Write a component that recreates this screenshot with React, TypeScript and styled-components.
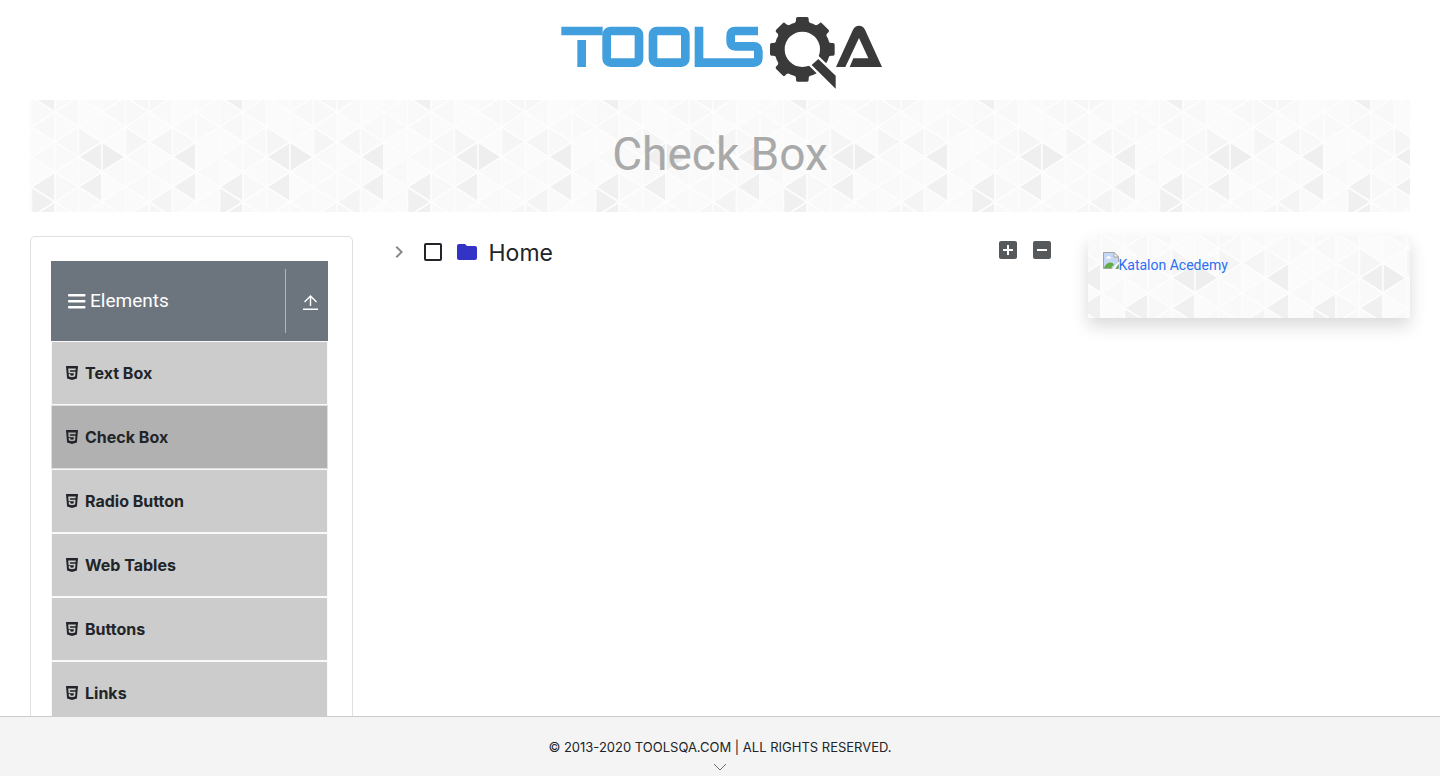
import React from "react";
import styled, { createGlobalStyle } from "styled-components";
import { MdAddBox, MdChevronRight, MdFolder, MdIndeterminateCheckBox } from "react-icons/md";
import { IoLogoHtml5 } from "react-icons/io5";

/* ---------- triangle texture shared by the banner and the promo card ---------- */

const COLUMN = 23.5;
const HALF_ROW = 15;
const TILE_WIDTH = 188;
const TILE_HEIGHT = 120;
const SHIFT_X = -30.5;

// One entry per column, two hex digits of grey per triangle from top to bottom.
const SHADES = [
  "f0 f9 f8 fb f9 fb f0 f0",
  "f9 f8 fa f8 f9 fa f8 f9",
  "fa fb fb f5 ef f9 f0 f9",
  "f9 f8 fa fb ee f9 fb f9",
  "f6 f8 f9 f5 f9 fa f9 fa",
  "f6 f9 fb f5 fb f9 fa f4",
  "fb fb f9 f8 ef fa f0 f9",
  "fa fa f9 fb fb f9 fb fa",
].map((row) => row.split(" "));

const buildTexture = () => {
  const shapes: string[] = [];
  for (let column = 0; column < 10; column += 1) {
    for (let step = -4; step <= 4; step += 1) {
      const grey = SHADES[column % 8][(step + 4) % 8];
      const left = SHIFT_X + column * COLUMN;
      const right = left + COLUMN;
      const y = 61 + step * HALF_ROW;
      const tipLeft = (column + Math.abs(step)) % 2 === 0;
      const tip = tipLeft ? left : right;
      const base = tipLeft ? right : left;
      shapes.push(
        `<path d="M${tip} ${y}L${base} ${y - HALF_ROW}V${y + HALF_ROW}Z" fill="#${grey}${grey}${grey}"/>`
      );
    }
  }
  const svg = `<svg xmlns="http://www.w3.org/2000/svg" width="${TILE_WIDTH}" height="${TILE_HEIGHT}"><g stroke="#fdfdfd" stroke-width="1.6" stroke-linejoin="round">${shapes.join("")}</g></svg>`;
  return `url("data:image/svg+xml,${encodeURIComponent(svg)}")`;
};

const texture = buildTexture();

/* ---------- styles ---------- */

const GlobalStyle = createGlobalStyle`
  *, *::before, *::after { box-sizing: border-box; }
  body {
    margin: 0;
    background: #fff;
    color: #212529;
    font-family: Inter, "Liberation Sans", sans-serif;
    font-size: 16px;
    line-height: 24px;
  }
  svg { display: block; flex: none; }
`;

const Page = styled.div`
  display: flex;
  flex-direction: column;
  height: 100vh;
`;

const Content = styled.div`
  flex: 1;
  min-height: 0;
  overflow-y: auto;
  scrollbar-width: none;
  padding: 0 30px;
`;

const Header = styled.header`
  display: flex;
  justify-content: center;
  padding: 5px 0 0;
`;

const Banner = styled.div`
  display: flex;
  align-items: center;
  justify-content: center;
  height: 112px;
  margin-bottom: 24px;
  padding-bottom: 4px;
  background: ${texture} center / ${TILE_WIDTH}px ${TILE_HEIGHT}px;
`;

const Title = styled.h1`
  margin: 0;
  color: #a9a9a9;
  font-family: Roboto, sans-serif;
  font-size: 46px;
  font-weight: 400;
  line-height: 56px;
`;

const Row = styled.div`
  display: flex;
  align-items: flex-start;
  margin: 0 -15px;
`;

const Column = styled.div<{ $share: number }>`
  flex: 0 0 ${(p) => p.$share}%;
  min-width: 0;
  padding: 0 15px;
`;

const Sidebar = styled.nav`
  padding: 24px 24px 24px 20px;
  border: 1px solid #dfdfdf;
  border-radius: 5px;
`;

const GroupHeader = styled.button`
  display: flex;
  align-items: center;
  width: 100%;
  height: 80px;
  padding: 0 10px 0 17px;
  border: 0;
  background: #6c757d;
  color: #fff;
  font-family: Roboto, sans-serif;
  font-size: 19px;
  line-height: 24px;
  text-align: left;
  cursor: pointer;
`;

const GroupName = styled.span`
  flex: 1;
  margin-left: 4px;
`;

const GroupToggle = styled.span`
  display: flex;
  align-items: center;
  height: 64px;
  padding-left: 17px;
  border-left: 1px solid #b5b5b5;
`;

const Menu = styled.ul`
  margin: 0;
  padding: 0;
  list-style: none;
`;

const MenuLink = styled.a<{ $active: boolean }>`
  display: flex;
  align-items: center;
  gap: 5px;
  height: 64px;
  padding: 0 12px;
  border: 1px solid ${(p) => (p.$active ? "#dcdee0" : "#f8f9fa")};
  background: ${(p) => (p.$active ? "#b1b1b1" : "#ccc")};
  color: #212529;
  font-weight: 700;
  text-decoration: none;
`;

const TreeBar = styled.div`
  display: flex;
  align-items: flex-start;
  justify-content: space-between;
  padding: 2px 4px 0;
`;

const TreeNode = styled.div`
  display: flex;
  align-items: center;
  height: 28px;
`;

const IconButton = styled.button`
  display: flex;
  padding: 0;
  border: 0;
  background: none;
  color: #56595c;
  cursor: pointer;
`;

const ToggleButton = styled(IconButton)`
  color: #888;
`;

const NodeLabel = styled.label`
  display: flex;
  align-items: center;
  margin-left: 13px;
  font-size: 23px;
  line-height: 28px;
`;

const NodeBox = styled.input`
  appearance: none;
  width: 18px;
  height: 18px;
  margin: 0 13px 0 0;
  border: 2px solid #212529;
  border-radius: 2px;
  &:checked { background: #212529; }
`;

const NodeName = styled.span`
  margin-left: 10px;
  padding-top: 2px;
`;

const TreeActions = styled.div`
  display: flex;
  gap: 10px;
`;

const Promo = styled.aside`
  height: 82px;
  padding: 16px 15px;
  background: ${texture} center / ${TILE_WIDTH}px ${TILE_HEIGHT}px;
  box-shadow: 0 8px 16px rgba(0, 0, 0, 0.15);
`;

const PromoLink = styled.a`
  display: flex;
  align-items: flex-start;
  color: #2b6ff3;
  font-family: Roboto, sans-serif;
  font-size: 14px;
  line-height: 26px;
  text-decoration: none;
`;

const Footer = styled.footer`
  display: flex;
  flex: none;
  flex-direction: column;
  align-items: center;
  gap: 4px;
  height: 60px;
  padding-top: 18px;
  border-top: 1px solid #c8cacc;
  background: #f4f4f4;
  font-size: 13px;
`;

/* ---------- drawings ---------- */

const teeth = [0, 45, 90, 180, 225, 270, 315];

const Logo = () => (
  <svg width="340" height="95" viewBox="0 0 1020 285" role="img" aria-label="ToolsQA">
    <g fill="none" stroke="#409fdc" strokeWidth="26">
      <path d="M34 78H158M95 105V186" />
      <rect x="170" y="78" width="97" height="95" rx="12" />
      <rect x="309" y="78" width="97" height="95" rx="12" />
      <path d="M447 65V173H611Q625 173 625 159V138Q625 124 611 124H556Q542 124 542 110V92Q542 78 556 78H624" />
    </g>
    <g fill="#3a3a3a">
      <circle cx="757" cy="133" r="68" fill="none" stroke="#3a3a3a" strokeWidth="30" />
      {teeth.map((angle) => (
        <path
          key={angle}
          transform={`rotate(${angle} 757 133)`}
          d="M725 62Q738 54 738 46V41Q738 36 743 36H771Q776 36 776 41V46Q776 54 789 62Z"
        />
      ))}
      <path d="M805 162L857 212V251L785 180Z" stroke="#fff" strokeWidth="14" />
      <path d="M805 162L857 212V251L785 180Z" />
      <path d="M858 186L909 74Q915 62 927 62T945 74L996 186H899L910 160H955L927 99L886 186Z" />
    </g>
  </svg>
);

const BarsIcon = () => (
  <svg width="18" height="18" viewBox="0 0 18 18" fill="currentColor" aria-hidden="true">
    <rect y="2" width="17.5" height="2.6" rx="1" />
    <rect y="8" width="17.5" height="2.6" rx="1" />
    <rect y="14" width="17.5" height="2.6" rx="1" />
  </svg>
);

const RaiseIcon = () => (
  <svg width="15" height="18" viewBox="0 0 15 18" fill="none" stroke="currentColor" strokeWidth="1.4" aria-hidden="true">
    <path d="M7.5 14V4M1.5 10L7.5 4L13.5 10M0 17.3H15" />
  </svg>
);

const MissingImageIcon = () => (
  <svg width="16" height="17" viewBox="0 0 16 17" aria-hidden="true">
    <path d="M.5.5H11L15.5 5V16.5H.5Z" fill="#c6d6f5" stroke="#a5a5a5" />
    <path d="M11 .5V5H15.5Z" fill="#fff" stroke="#a5a5a5" />
    <path d="M3 6.5Q3 4.8 4.6 4.8Q5.2 3.2 6.6 4.4Q8 4.6 8 6.5Z" fill="#fff" />
    <path d="M1 16Q3 10.5 7.5 10.5Q10 10.5 11 12.5L8 16Z" fill="#63ad45" />
    <path d="M9 17L16 9.5V12L12 17Z" fill="#fff" />
    <path d="M12.5 16.5H15.5V12Z" fill="#63ad45" />
  </svg>
);

const ChevronDown = () => (
  <svg width="14" height="9" viewBox="0 0 14 9" fill="none" stroke="#707070" aria-hidden="true">
    <path d="M1 1L7 7L13 1" />
  </svg>
);

/* ---------- page ---------- */

const items = ["Text Box", "Check Box", "Radio Button", "Web Tables", "Buttons", "Links"];

export default function App() {
  return (
    <Page>
      <GlobalStyle />
      <Content>
        <Header>
          <Logo />
        </Header>
        <Banner>
          <Title>Check Box</Title>
        </Banner>
        <Row>
          <Column $share={25}>
            <Sidebar>
              <GroupHeader type="button">
                <BarsIcon />
                <GroupName>Elements</GroupName>
                <GroupToggle>
                  <RaiseIcon />
                </GroupToggle>
              </GroupHeader>
              <Menu>
                {items.map((item) => (
                  <li key={item}>
                    <MenuLink href="#" $active={item === "Check Box"}>
                      <IoLogoHtml5 size={16} />
                      {item}
                    </MenuLink>
                  </li>
                ))}
              </Menu>
            </Sidebar>
          </Column>
          <Column $share={50}>
            <TreeBar>
              <TreeNode>
                <ToggleButton type="button" aria-label="Toggle">
                  <MdChevronRight size={24} />
                </ToggleButton>
                <NodeLabel>
                  <NodeBox type="checkbox" />
                  <MdFolder size={24} color="#3333c5" />
                  <NodeName>Home</NodeName>
                </NodeLabel>
              </TreeNode>
              <TreeActions>
                <IconButton type="button" aria-label="Expand all">
                  <MdAddBox size={24} />
                </IconButton>
                <IconButton type="button" aria-label="Collapse all">
                  <MdIndeterminateCheckBox size={24} />
                </IconButton>
              </TreeActions>
            </TreeBar>
          </Column>
          <Column $share={25}>
            <Promo>
              <PromoLink href="#">
                <MissingImageIcon />
                Katalon Acedemy
              </PromoLink>
            </Promo>
          </Column>
        </Row>
      </Content>
      <Footer>
        <span>© 2013-2020 TOOLSQA.COM | ALL RIGHTS RESERVED.</span>
        <ChevronDown />
      </Footer>
    </Page>
  );
}
